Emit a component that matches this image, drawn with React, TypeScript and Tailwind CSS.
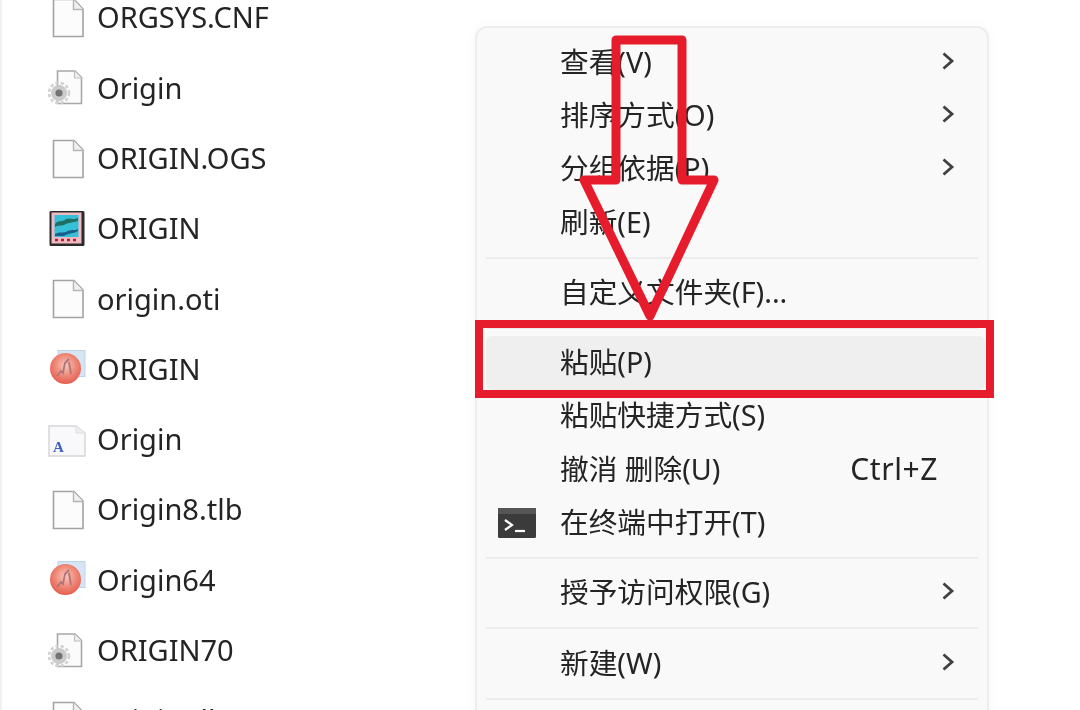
const files = [
  { name: "ORGSYS.CNF", icon: "doc" },
  { name: "Origin", icon: "gear" },
  { name: "ORIGIN.OGS", icon: "doc" },
  { name: "ORIGIN", icon: "app" },
  { name: "origin.oti", icon: "doc" },
  { name: "ORIGIN", icon: "ball" },
  { name: "Origin", icon: "font" },
  { name: "Origin8.tlb", icon: "doc" },
  { name: "Origin64", icon: "ball" },
  { name: "ORIGIN70", icon: "gear" },
  { name: "Origin.tlb 64", icon: "doc" },
];

function FileIcon({ kind }: { kind: string }) {
  if (kind === "doc") {
    return (
      <svg width="38" height="40" viewBox="0 0 38 40">
        <path d="M5.5 1.5H26L35 11V38.5H5.5Z" fill="#fcfcfc" stroke="#a3a3a3" strokeWidth="1.6" />
        <path d="M25.5 1.5V11.5H35" fill="#f0f0f0" stroke="#b5b5b5" strokeWidth="1.4" />
      </svg>
    );
  }
  if (kind === "gear") {
    return (
      <svg width="38" height="40" viewBox="0 0 38 40">
        <path d="M9.5 3H27L33.5 9.5V35.5H9.5Z" fill="#fbfbfb" stroke="#a8a8a8" strokeWidth="1.6" />
        <path d="M26.5 3V10H33.5" fill="#f0f0f0" stroke="#c0c0c0" strokeWidth="1.2" />
        <circle cx="11" cy="25" r="8" fill="#cbcbcb" />
        <circle cx="11" cy="25" r="10" fill="none" stroke="#d2d2d2" strokeWidth="2.6" strokeDasharray="3.2 2.2" />
        <circle cx="11" cy="25" r="3.6" fill="#747474" />
      </svg>
    );
  }
  if (kind === "app") {
    return (
      <svg width="38" height="40" viewBox="0 0 38 40">
        <rect x="1.5" y="2" width="35" height="35" rx="1.5" fill="#2b2b2b" />
        <rect x="3.5" y="3.5" width="30" height="31" fill="#f1b9c2" />
        <rect x="6.5" y="6" width="24" height="22" fill="#35c0d8" />
        <path d="M7 15C11 10 14 14 18 10C22 9 25 11 30 9V12C25 14 20 13 16 16C12 17 10 16 7 18Z" fill="#1f6e62" />
        <path d="M7 25C12 22 15 25 20 22C24 20 27 22 30 20V22C25 25 20 24 16 27H7Z" fill="#1a5f88" />
        <path d="M7 31H10M13 31H16M19 31H22M25 31H28" stroke="#b0203a" strokeWidth="2.4" />
      </svg>
    );
  }
  if (kind === "ball") {
    return (
      <svg width="38" height="40" viewBox="0 0 38 40">
        <defs>
          <radialGradient id="ballFill" cx="0.5" cy="0.4" r="0.6">
            <stop offset="0" stopColor="#f8c9bd" />
            <stop offset="0.6" stopColor="#ee8474" />
            <stop offset="1" stopColor="#e55f50" />
          </radialGradient>
        </defs>
        <rect x="10" y="0.5" width="27" height="26" fill="#d5e5f3" stroke="#bfd3e6" />
        <circle cx="17.5" cy="18.5" r="15.5" fill="url(#ballFill)" />
        <path d="M9 26L13 21L15 23L17 13L21 9M21 12L23 24" fill="none" stroke="#b07378" strokeWidth="1.8" />
      </svg>
    );
  }
  return (
    <svg width="38" height="40" viewBox="0 0 38 40">
      <path d="M1 6H28L37 13V36H1Z" fill="#f9f9fb" stroke="#d5d5d8" strokeWidth="1.4" />
      <path d="M28 6V13H37" fill="#eeeeee" stroke="#dddddd" />
      <text x="5" y="32" fontSize="15" fontWeight="700" fontFamily="'Liberation Serif', serif" fill="#3d63b8">A</text>
    </svg>
  );
}

function Chevron() {
  return (
    <svg width="14" height="20" viewBox="0 0 14 20" className="shrink-0">
      <path d="M2.5 2.5L11 10L2.5 17.5" fill="none" stroke="#404040" strokeWidth="2.8" />
    </svg>
  );
}

function TerminalIcon() {
  return (
    <svg width="38" height="30" viewBox="0 0 38 30">
      <rect width="38" height="30" rx="1.5" fill="#3b3b3b" />
      <rect width="38" height="6" fill="#555555" />
      <path d="M7 12L14 17L7 22" fill="none" stroke="#ffffff" strokeWidth="2.2" />
      <path d="M17 23H27" stroke="#ffffff" strokeWidth="2.2" />
    </svg>
  );
}

function Row({ label, arrow, hint, active, icon }: { label: string; arrow?: boolean; hint?: string; active?: boolean; icon?: boolean }) {
  return (
    <div className={`h-[53.3px] flex items-center rounded-md ${active ? "bg-[#efefef] -mr-[7px]" : ""}`}>
      <div className="w-[74px] pl-[12px] shrink-0 flex items-center">{icon && <TerminalIcon />}</div>
      <span className="flex-1 whitespace-nowrap pb-[3px]">{label}</span>
      {hint && <span className="mr-[40px] pb-[2px] text-[30px] tracking-[0.6px]">{hint}</span>}
      {arrow && <div className="mr-[23px] -mt-[4px] flex items-center"><Chevron /></div>}
    </div>
  );
}

function Sep() {
  return (
    <div className="h-[17px] flex items-center">
      <div className="h-[2px] w-full bg-[#ececec]" />
    </div>
  );
}

export default function App() {
  return (
    <div className="relative w-[1080px] h-[710px] overflow-hidden bg-white flex font-['Noto_Sans','Noto_Sans_CJK_SC',sans-serif] text-[#242424] blur-[0.6px]">
      <div className="w-[475px] shrink-0 border-l-2 border-[#f2f2f2] -mt-[17px] pl-[46px] flex flex-col text-[29px]">
        {files.map((f, i) => (
          <div key={i} className="h-[70.3px] shrink-0 flex items-center gap-[11px]">
            <FileIcon kind={f.icon} />
            <span className="whitespace-nowrap pb-[2px]">{f.name}</span>
          </div>
        ))}
      </div>

      <div className="mt-[26px] w-[514px] h-[720px] shrink-0 bg-[#f9f9f9] border-2 border-[#ededed] rounded-t-xl shadow-[0_0_14px_rgba(0,0,0,0.03)] px-[9px] pt-[8px] text-[28.7px]">
        <Row label="查看(V)" arrow />
        <Row label="排序方式(O)" arrow />
        <Row label="分组依据(P)" arrow />
        <Row label="刷新(E)" />
        <Sep />
        <Row label="自定义文件夹(F)..." />
        <Sep />
        <Row label="粘贴(P)" active />
        <Row label="粘贴快捷方式(S)" />
        <Row label="撤消 删除(U)" hint="Ctrl+Z" />
        <Row label="在终端中打开(T)" icon />
        <Sep />
        <Row label="授予访问权限(G)" arrow />
        <Sep />
        <Row label="新建(W)" arrow />
        <Sep />
      </div>

      {/* red annotations over the menu */}
      <div className="absolute left-[475px] top-[320px] w-[519px] h-[78px] border-[8px] border-[#e61c2c]" />
      <svg className="absolute left-0 top-0" width="1080" height="710" viewBox="0 0 1080 710">
        <path d="M616 40H682V180H714L650 316L584 180H616Z" fill="none" stroke="#e61c2c" strokeWidth="9" strokeLinejoin="round" />
      </svg>
    </div>
  );
}
